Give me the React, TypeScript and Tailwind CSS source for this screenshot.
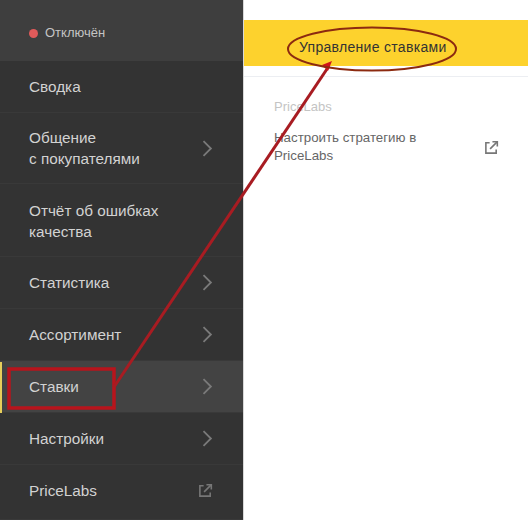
import React from "react";

const Chevron = () => (
  <svg width="11" height="17" viewBox="0 0 11 17" fill="none" stroke="#7a7a7a" strokeWidth="1.8" className="shrink-0">
    <path d="M1.5 1.2l7.4 7.3-7.4 7.3" />
  </svg>
);

const External = ({ color }: { color: string }) => (
  <svg width="15" height="15" viewBox="0 0 16 16" fill="none" stroke={color} strokeWidth="1.7" className="shrink-0">
    <path d="M6 3H2v11h11v-4" />
    <path d="M6.5 9.5L14 2" />
    <path d="M9 1.8h5.2V7" />
  </svg>
);

type Row = { label: React.ReactNode; h: string; icon?: "chevron" | "external"; active?: boolean; pad?: string };

const rows: Row[] = [
  { label: "Сводка", h: "h-[52px]" },
  { label: <>Общение<br />с покупателями</>, h: "h-[71px]", icon: "chevron" },
  { label: <>Отчёт об ошибках<br />качества</>, h: "h-[73px]", pad: "pt-[2px]" },
  { label: "Статистика", h: "h-[52px]", icon: "chevron" },
  { label: "Ассортимент", h: "h-[52px]", icon: "chevron" },
  { label: "Ставки", h: "h-[52px]", icon: "chevron", active: true },
  { label: "Настройки", h: "h-[52px]", icon: "chevron" },
  { label: "PriceLabs", h: "h-[55px]", icon: "external", pad: "pb-[3px]" },
];

export default function App() {
  return (
    <div className="relative flex h-[520px] w-[528px] overflow-hidden bg-white font-['Liberation_Sans',Arial,sans-serif]">
      <aside className="flex w-[243px] shrink-0 flex-col bg-[#333333]">
        <div className="flex h-[61px] items-center gap-[7px] bg-[#3e3e3e] pl-[29px] pt-[5px] text-[13px] text-[#c4c4c4]">
          <span className="h-[9px] w-[9px] rounded-full bg-[#e05a5a]" />
          Отключён
        </div>
        {rows.map((r, i) => (
          <div
            key={i}
            className={`relative flex items-center justify-between border-b border-[#393939] pl-[29px] pr-[30px] text-[15.3px] leading-[21px] text-[#d2d2d2] ${r.h} ${r.pad ?? ""} ${r.active ? "bg-[#434343]" : ""}`}
          >
            {r.active && <span className="absolute left-0 top-[1px] h-[51px] w-[2px] bg-[#e8cf5a]" />}
            <span>{r.label}</span>
            {r.icon === "chevron" && <Chevron />}
            {r.icon === "external" && <External color="#777777" />}
          </div>
        ))}
      </aside>
      <main className="flex min-w-0 flex-1 flex-col border-l border-[#d8d8d8] pt-[20px]">
        <div className="flex h-[46px] items-center bg-[#fdd22d] pl-[55px] pt-[8px] text-[14px] tracking-[0.3px] text-[#333333]">
          Управление ставками
        </div>
        <div className="mt-[10px] border-t border-[#eceef2] pl-[30px] pr-[29px] pt-[21px]">
          <div className="text-[13px] leading-[18px] text-[#c4c4c4]">PriceLabs</div>
          <div className="mt-[13px] flex items-center justify-between">
            <div className="text-[13.3px] leading-[18px] text-[#666666]">
              Настроить стратегию в<br />PriceLabs
            </div>
            <External color="#777777" />
          </div>
        </div>
      </main>
      <svg width="528" height="520" viewBox="0 0 528 520" fill="none" className="pointer-events-none absolute left-0 top-0">
        <rect x="9" y="369" width="105" height="39" stroke="#b8141c" strokeWidth="3.5" />
        <path d="M114 387L329 66" stroke="#a81c22" strokeWidth="3" />
        <path d="M332 61l-10 4 6 6z" fill="#d0141c" />
        <ellipse cx="372" cy="49" rx="84" ry="21.5" stroke="#8c2a10" strokeWidth="2" />
      </svg>
    </div>
  );
}
